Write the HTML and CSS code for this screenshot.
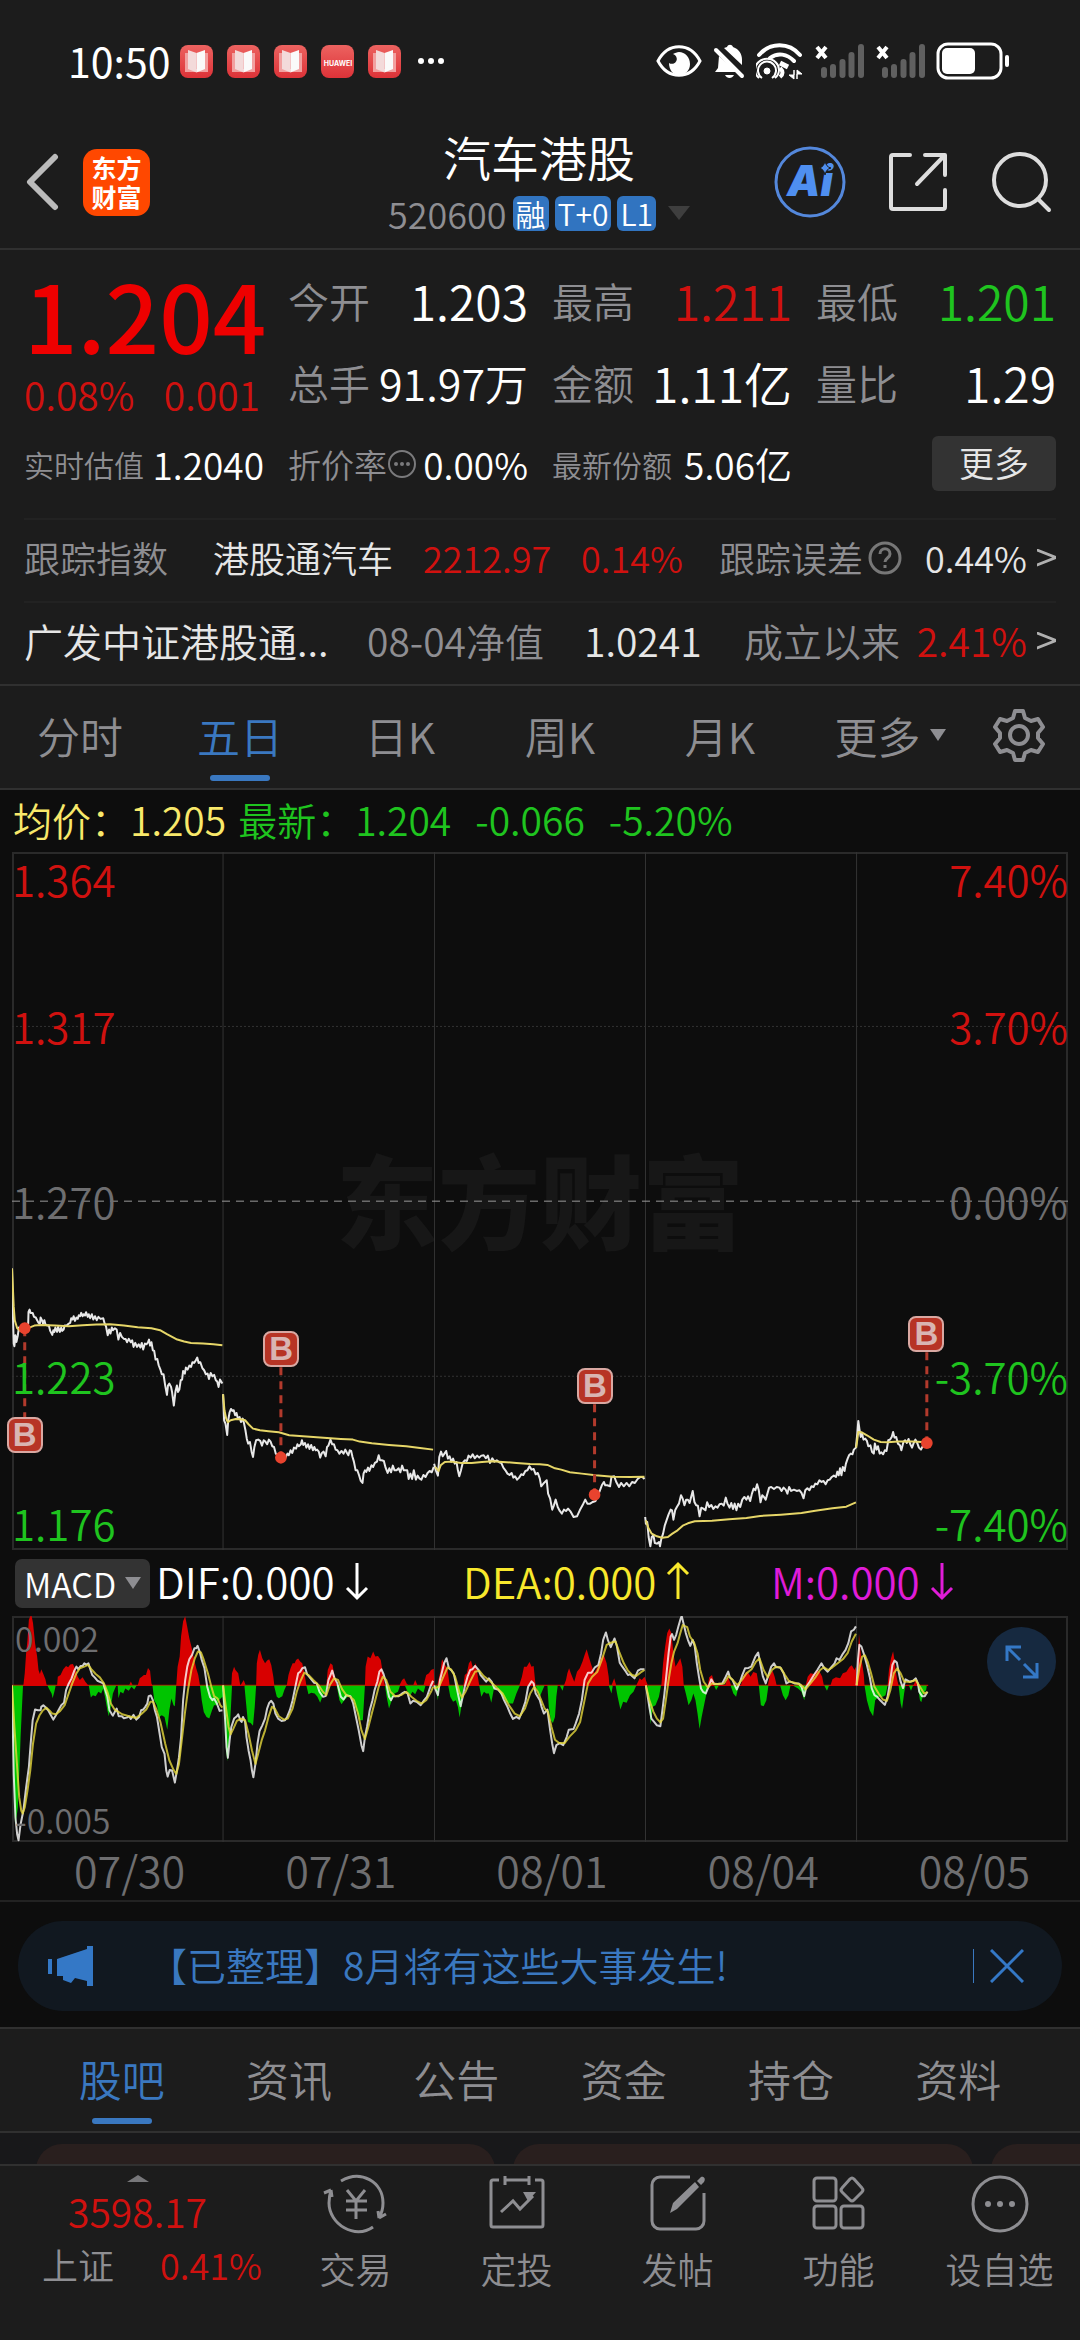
FILE: index.html
```html
<!DOCTYPE html>
<html lang="zh-CN">
<head>
    <meta charset="UTF-8">
    <meta name="viewport" content="width=device-width, initial-scale=1.0">
    <title>汽车港股 520600</title>
    <link rel="stylesheet" href="styles.css">
</head>
<body>
    <svg class="defs" aria-hidden="true">
        <defs>
            <linearGradient id="redGrad" x1="0" y1="0" x2="0" y2="1">
                <stop offset="0" stop-color="#ec6360"/>
                <stop offset="1" stop-color="#dd3238"/>
            </linearGradient>
            <symbol id="book" viewBox="0 0 33 33">
                <rect width="33" height="33" rx="8" fill="url(#redGrad)"/>
                <path d="M5 8h5v17H5zM23 8h5v17h-5zM5 24h23v3H5z" fill="#f2a0a0"/>
                <path d="M8 5l8.500 3v19.500L8 24z" fill="#f3dada"/>
                <path d="M25 5l-8.500 3v19.500L25 24z" fill="#fafafa"/>
            </symbol>
            <symbol id="signal" viewBox="0 0 50 36">
                <path d="M3 4l9 11M12 4L3 15" stroke="#fff" stroke-width="4"/>
                <path d="M10 27v5M19 24v8M28.500 19v13M37.500 12v20M47 4v28" stroke="#606060" stroke-width="6" stroke-linecap="round"/>
            </symbol>
            <symbol id="down" viewBox="0 0 24 40">
                <path d="M12 2v35M2 27l10 10 10-10" fill="none" stroke="currentColor" stroke-width="3"/>
            </symbol>
            <symbol id="up" viewBox="0 0 24 40">
                <path d="M12 38V3M2 13L12 3l10 10" fill="none" stroke="currentColor" stroke-width="3"/>
            </symbol>
        </defs>
    </svg>

    <div class="status-bar">
        <span class="clock">10:50</span>
        <div class="notifications">
            <svg><use href="#book"/></svg>
            <svg><use href="#book"/></svg>
            <svg><use href="#book"/></svg>
            <span class="huawei">HUAWEI</span>
            <svg><use href="#book"/></svg>
            <svg viewBox="0 0 33 33" fill="#fff"><circle cx="6" cy="16" r="3"/><circle cx="16" cy="16" r="3"/><circle cx="26" cy="16" r="3"/></svg>
        </div>
        <div class="system-icons">
            <svg width="46" height="36" viewBox="0 0 46 36">
                <path d="M2 18C12-1 34-1 44 18 34 37 12 37 2 18z" fill="none" stroke="#fff" stroke-width="3"/>
                <path d="M17 11a5 5 0 1 1-4 9c0 7 4 12 10 12 7 0 11-5 11-11 0-7-5-12-11-12-2 0-4 1-6 2z" fill="#fff"/>
            </svg>
            <svg width="32" height="36" viewBox="0 0 32 36">
                <path d="M11 5l3-1c1-3 5-3 6 0 6 2 9 7 9 13v5zM6 13l18 16H2l3-4z" fill="#fff"/>
                <path d="M3 7l26 26" stroke="#fff" stroke-width="4" stroke-linecap="round"/>
                <path d="M12 32h9c-2 4-7 4-9 0z" fill="#fff"/>
            </svg>
            <svg width="47" height="38" viewBox="0 0 47 38" fill="none" stroke="#fff">
                <path d="M3 13C14 0 33 0 44 13M14 16c8-6 17-4 24 3" stroke-width="4" stroke-linecap="round"/>
                <path d="M24 21l8 4" stroke-width="5"/>
                <circle cx="11" cy="29" r="3" fill="#fff"/>
                <path d="M6 36a9 9 0 1 1 10 0M3 36a12 11 0 1 1 16 0" stroke-width="2"/>
                <path d="M24 26q5 5 0 9" stroke-width="4"/>
                <path d="M38 28v9l-5-4h5zM41 37v-9l5 4h-5z" fill="#fff" stroke-width="1"/>
            </svg>
            <svg width="50" height="36"><use href="#signal"/></svg>
            <svg width="50" height="36"><use href="#signal"/></svg>
            <svg width="74" height="38" viewBox="0 0 74 38">
                <rect x="2" y="2" width="63" height="34" rx="10" fill="none" stroke="#fff" stroke-width="3"/>
                <rect x="6" y="6" width="33" height="26" rx="5" fill="#fff"/>
                <rect x="69" y="13" width="4" height="12" rx="2" fill="#fff"/>
            </svg>
        </div>
    </div>

    <header class="header">
        <div class="header-left">
            <button class="icon-btn" aria-label="返回">
                <svg width="34" height="58" viewBox="0 0 34 58"><path d="M29 4L4 29l25 25" fill="none" stroke="#bbb" stroke-width="6" stroke-linecap="round" stroke-linejoin="round"/></svg>
            </button>
            <span class="logo">东方<br>财富</span>
        </div>
        <div class="header-title">
            <h1>汽车港股</h1>
            <p>
                <span class="code">520600</span>
                <span class="tag">融</span>
                <span class="tag">T+0</span>
                <span class="tag">L1</span>
                <span class="arrow-down"></span>
            </p>
        </div>
        <div class="header-right">
            <button class="icon-btn" aria-label="AI">
                <svg width="72" height="72" viewBox="0 0 72 72">
                    <circle cx="36" cy="36" r="34" fill="none" stroke="#5488dc" stroke-width="3"/>
                    <text x="13" y="50" class="ai-text">Ai</text>
                    <path d="M51 15q1 6 6 7-5 1-6 7-1-6-6-7 5-1 6-7z" fill="#4f8ff0" stroke="#1c1c1c" stroke-width="1"/>
                </svg>
            </button>
            <button class="icon-btn" aria-label="分享">
                <svg width="60" height="60" viewBox="0 0 60 60" fill="none" stroke="#ddd" stroke-width="4" stroke-linecap="round" stroke-linejoin="round">
                    <path d="M22 3H5a2 2 0 0 0-2 2v50a2 2 0 0 0 2 2h50a2 2 0 0 0 2-2V38M37 3h20v20M56 4L29 32"/>
                </svg>
            </button>
            <button class="icon-btn" aria-label="搜索">
                <svg width="62" height="62" viewBox="0 0 62 62" fill="none" stroke="#ddd" stroke-width="4" stroke-linecap="round">
                    <circle cx="30" cy="29" r="26"/><path d="M48 48l11 11"/>
                </svg>
            </button>
        </div>
    </header>

    <section class="quote">
        <div class="quote-grid">
            <div class="price">
                <strong>1.204</strong>
                <p><span>0.08%</span><span>0.001</span></p>
            </div>
            <dl class="stats">
                <div><dt>今开</dt><dd>1.203</dd></div>
                <div><dt>最高</dt><dd class="red">1.211</dd></div>
                <div><dt>最低</dt><dd class="green">1.201</dd></div>
                <div><dt>总手</dt><dd class="mid">91.97万</dd></div>
                <div><dt>金额</dt><dd>1.11亿</dd></div>
                <div><dt>量比</dt><dd>1.29</dd></div>
            </dl>
        </div>
        <div class="extra">
            <div class="extra-item"><span class="small">实时估值</span><b>1.2040</b></div>
            <div class="extra-item"><span class="rate">折价率
                <svg width="30" height="30" viewBox="0 0 30 30" fill="#7a7a7c"><circle cx="15" cy="15" r="13" fill="none" stroke="#7a7a7c" stroke-width="2"/><circle cx="9" cy="15" r="2"/><circle cx="15" cy="15" r="2"/><circle cx="21" cy="15" r="2"/></svg></span><b>0.00%</b></div>
            <div class="extra-item"><span class="small">最新份额</span><b>5.06亿</b></div>
            <button class="more-btn">更多</button>
        </div>
        <a class="track track-index" href="#">
            <span class="label">跟踪指数</span>
            <span>港股通汽车</span>
            <span class="red">2212.97</span>
            <span class="red">0.14%</span>
            <span class="label with-icon">跟踪误差
                <svg width="34" height="34" viewBox="0 0 34 34" fill="none" stroke="#777" stroke-width="3"><circle cx="17" cy="17" r="15"/><path d="M12 13c0-7 10-7 10 0 0 4-5 4-5 8M17 24v3"/></svg></span>
            <span class="last">0.44% <i class="chevron"></i></span>
        </a>
        <a class="track track-fund" href="#">
            <span>广发中证港股通...</span>
            <span class="label">08-04净值</span>
            <span>1.0241</span>
            <span class="label">成立以来</span>
            <span class="last red">2.41% <i class="chevron"></i></span>
        </a>
    </section>

    <nav class="periods">
        <button>分时</button>
        <button class="active">五日</button>
        <button>日K</button>
        <button>周K</button>
        <button>月K</button>
        <button class="more-period">更多<i class="caret"></i></button>
        <button class="gear" aria-label="设置">
            <svg width="54" height="54" viewBox="0 0 54 54" fill="none" stroke="#8e8e92" stroke-width="4" stroke-linejoin="round">
                <path d="M23 3h8l2 7 6 3 7-2 5 8-5 6v5l5 6-5 8-7-2-6 3-2 7h-8l-2-7-6-3-7 2-5-8 5-6v-5l-5-6 5-8 7 2 6-3z"/>
                <circle cx="27" cy="27" r="9"/>
            </svg>
        </button>
    </nav>

    <main class="charts">
        <p class="legend">
            <span class="yellow">均价：1.205</span>
            <span class="green">最新：1.204</span>
            <span class="green">-0.066</span>
            <span class="green">-5.20%</span>
        </p>

        <div class="price-chart">
            <span class="watermark">东方财富</span>
            <svg class="plot" viewBox="35 -1164 3067 2093" preserveAspectRatio="none">
                <path class="grid" d="M648-1164V929M1262-1164V929M1875-1164V929M2488-1164V929"/>
                <path class="grid dotted" d="M35-641H3102M35 408H3102"/>
                <path class="zero" d="M35-117H3102"/>
                <g class="line price-line">
                    <polyline points="35,85 37,200 40,310 42,318 45,285 48,305 52,285 55,262 62,268 68,275 72,265 78,262 82,250 83,215 86,208 89,218 95,218 99,230 104,232 108,240 112,248 116,250 118,232 122,240 125,250 129,240 132,252 137,256 142,256 146,272 152,284 155,270 158,275 161,262 166,275 169,260 174,275 178,262 181,272 185,268 188,256 194,256 200,250 204,248 207,234 211,238 214,228 218,242 222,232 226,236 229,225 233,228 236,218 240,228 243,222 247,226 250,216 255,230 258,222 262,234 267,222 271,238 276,228 281,240 286,230 292,236 300,234 304,250 308,258 313,285 317,268 321,280 325,262 328,270 334,264 339,268 344,298 349,278 354,290 360,296 365,296 369,306 374,296 380,306 384,300 388,320 393,308 398,320 403,312 408,322 412,308 416,328 421,310 426,312 430,306 433,298 436,316 440,306 444,330 448,332 452,358 457,356 461,375 466,388 470,402 475,402 480,436 485,464 488,436 492,430 497,440 500,456 505,496 510,452 514,436 517,455 521,448 525,420 529,418 532,392 537,400 540,382 545,388 550,376 555,380 559,366 564,368 568,362 573,352 577,368 582,366 588,384 593,390 598,402 603,400 607,416 612,398 617,408 622,404 627,420 631,424 635,440 639,418 646,430"/>
                    <polyline points="648,462 651,540 655,550 660,584 663,540 667,516 671,506 675,512 679,510 683,525 687,518 691,535 696,530 700,545 705,535 709,550 713,570 717,596 721,610 726,605 731,635 735,650 739,620 744,600 750,598 756,602 761,616 766,600 771,604 776,612 781,598 786,604 791,618 796,620 801,640 806,645 812,652 820,655 828,655 835,640 839,645 844,630 849,638 854,622 860,625 864,612 868,618 874,612 877,600 881,614 886,608 890,622 895,612 899,626 904,614 909,630 913,620 917,630 921,628 926,634 930,652 935,638 940,634 946,648 950,620 954,616 960,598 965,612 970,612 975,628 980,630 986,640 992,632 998,640 1003,628 1008,638 1012,645 1016,630 1020,632 1024,650 1028,664 1033,690 1038,690 1043,705 1048,722 1053,728 1056,700 1060,690 1064,695 1069,682 1073,692 1079,675 1084,680 1089,668 1095,664 1100,645 1104,660 1109,660 1115,662 1120,682 1126,698 1131,684 1136,696 1141,676 1146,690 1152,690 1158,684 1163,696 1168,676 1173,690 1178,690 1183,690 1187,716 1192,700 1197,716 1202,690 1208,718 1213,706 1218,714 1224,718 1230,704 1236,710 1242,698 1248,692 1254,696 1260,680"/>
                    <polyline points="1261,670 1266,690 1272,706 1276,650 1281,634 1286,648 1291,640 1296,632 1301,655 1306,648 1311,664 1316,655 1321,670 1326,665 1330,690 1334,708 1339,690 1344,668 1350,660 1356,662 1361,646 1367,652 1373,642 1379,654 1386,646 1392,652 1398,646 1405,645 1411,654 1417,646 1423,668 1430,654 1436,664 1443,660 1450,666 1456,668 1462,682 1468,690 1474,700 1480,704 1486,698 1491,712 1496,708 1502,718 1508,712 1514,702 1520,704 1526,692 1532,690 1538,678 1544,688 1550,686 1556,702 1562,698 1568,715 1572,738 1580,728 1588,720 1592,760 1598,775 1604,808 1609,795 1614,778 1620,800 1626,812 1632,820 1638,808 1644,812 1650,805 1658,815 1666,830 1676,828 1684,810 1692,795 1700,778 1706,790 1714,790 1722,785 1730,782 1736,765 1742,752 1748,735 1754,725 1758,735 1764,735 1772,738 1776,710 1784,708 1790,725 1798,740 1804,728 1812,738 1820,728 1828,738 1836,725 1844,728 1852,716 1860,710 1866,710 1872,716"/>
                    <polyline transform="translate(1568 0)" points="306,830 308,850 312,845 316,890 321,918 325,890 330,885 334,908 340,910 346,905 349,918 353,895 358,880 363,855 368,840 374,822 380,808 384,810 388,838 393,810 398,800 404,790 410,765 415,775 420,795 425,778 430,778 435,788 440,768 444,752 449,785 454,795 459,796 464,828 469,802 475,805 481,810 486,786 492,800 498,794 504,806 510,798 516,802 522,792 528,790 534,796 540,772 545,790 551,802 556,788 561,806 566,790 571,810 576,790 582,800 588,778 594,770 600,778 605,768 611,782 616,760 621,745 626,750 631,732 636,750 641,786 646,765 651,770 656,778 661,760 666,742 672,740 680,746 688,740 696,742 702,752 708,742 714,748 719,760 724,740 730,752 738,748 746,752 754,750 760,758 766,774 771,750 777,744 783,750 789,738 795,740 800,730 806,732 812,720 818,725 824,722 830,732 836,720 842,718 848,710 854,706 860,710 864,694 868,705 872,684 876,705 880,680 885,692 889,670 894,655 898,645 903,640 908,642 912,628 918,622 922,580 925,542 928,565 932,590 936,580 940,598 945,595 950,602 954,618 960,615 965,635 970,640 973,610 978,628 982,618 987,640 992,636 997,642 1002,630 1007,632 1012,600 1017,598 1022,590 1026,575 1030,592 1035,590 1040,610 1046,615 1050,630 1056,605 1061,600 1066,608 1071,596 1076,612 1081,622 1087,605 1091,598 1096,608 1101,622 1107,628 1112,618 1118,618 1124,608"/>
                </g>
                <g class="line average-line">
                    <polyline points="35,85 40,200 43,240 50,264 60,272 72,268 85,262 100,256 120,254 160,256 200,258 240,255 280,253 320,252 360,256 400,261 440,264 465,270 485,282 500,290 515,298 535,304 555,308 590,310 620,312 646,315"/>
                    <polyline points="648,462 652,510 657,535 662,546 670,540 685,536 700,537 712,540 722,552 735,565 755,570 780,573 810,576 840,585 880,588 930,592 990,596 1025,598 1045,604 1080,609 1130,614 1180,618 1220,623 1258,628"/>
                    <polyline points="1264,680 1274,692 1280,675 1292,665 1310,664 1340,668 1370,668 1400,665 1430,663 1460,665 1500,668 1540,671 1568,672 1590,674 1612,684 1630,688 1655,696 1690,700 1730,705 1780,709 1830,710 1872,709"/>
                    <polyline transform="translate(1568 0)" points="308,840 315,862 325,880 340,888 355,892 372,890 385,880 400,870 415,856 430,849 450,843 500,841 550,837 600,833 640,827 700,823 760,818 800,811 850,804 890,799 918,786"/>
                    <polyline transform="translate(1568 0)" points="919,622 925,575 935,576 950,585 970,598 990,605 1010,606 1040,604 1080,604 1126,606"/>
                </g>
                <path class="buy-link" d="M72 264V540M816 381V652M1727 492V763M2692 336V608"/>
                <g fill="#e8432e">
                    <ellipse cx="72" cy="264" rx="17" ry="18"/>
                    <ellipse cx="816" cy="652" rx="17" ry="18"/>
                    <ellipse cx="1727" cy="763" rx="17" ry="18"/>
                    <ellipse cx="2692" cy="608" rx="17" ry="18"/>
                </g>
            </svg>
            <div class="axis axis-left">
                <span class="red">1.364</span><span class="red">1.317</span><span>1.270</span><span class="green">1.223</span><span class="green">1.176</span>
            </div>
            <div class="axis axis-right">
                <span class="red">7.40%</span><span class="red">3.70%</span><span>0.00%</span><span class="green">-3.70%</span><span class="green">-7.40%</span>
            </div>
            <!-- buy points -->
            <span class="buy" style="left: 1.2%; top: 83.5%">B</span>
            <span class="buy" style="left: 25.5%; top: 71.2%">B</span>
            <span class="buy" style="left: 55.2%; top: 76.5%">B</span>
            <span class="buy" style="left: 86.6%; top: 69%">B</span>
        </div>

        <div class="macd-bar">
            <button class="macd-btn">MACD<i class="caret"></i></button>
            <span class="dif">DIF:0.000<svg width="24" height="40"><use href="#down"/></svg></span>
            <span class="dea">DEA:0.000<svg width="24" height="40"><use href="#up"/></svg></span>
            <span class="m">M:0.000<svg width="24" height="40"><use href="#down"/></svg></span>
        </div>

        <div class="macd-chart">
            <svg class="plot" viewBox="35 229 3067 674" preserveAspectRatio="none">
                <path class="grid" d="M648 229V903M1262 229V903M1875 229V903M2488 229V903"/>
                <g>
                    <path fill="#d80000" d="M35 434H1568V438H35zM68 436L72 400 76 340 80 300 84 240 88 230 92 229 96 250 102 310 108 350 112 390 116 402 120 388 126 402 132 418 136 436zM166 436L168 410 176 405 184 388 192 378 198 382 204 374 212 372 220 390 226 410 232 420 240 412 248 425 257 436zM375 436L380 424 386 436zM400 436L406 415 412 410 418 405 424 405 430 384 436 392 440 430 443 436zM512 436L516 380 522 350 526 290 532 245 538 230 544 262 550 295 556 320 562 350 570 385 576 405 581 436zM672 436L674 400 680 380 684 390 692 400 698 436 702 430 708 420 714 436zM744 436L746 370 750 345 755 330 762 355 770 370 776 362 782 358 788 375 794 410 797 436zM833 436L838 405 844 385 850 370 856 370 860 360 866 356 872 365 878 370 886 410 890 436zM948 436L952 390 960 370 966 375 972 410 978 436zM1060 436L1062 380 1068 350 1076 355 1084 335 1090 350 1098 348 1106 360 1112 400 1118 436zM1160 436L1168 420 1174 415 1182 432 1190 436zM1200 436L1206 420 1212 434zM1230 436L1238 405 1246 400 1252 390 1260 386 1262 436zM1270 436L1278 400 1284 358 1290 370 1300 388 1306 436zM1346 436L1350 405 1356 400 1362 370 1368 362 1374 385 1382 370 1388 410 1392 436zM1508 436L1516 410 1522 380 1530 380 1538 366 1544 380 1550 378 1554 420 1556 436z"/>
                    <path fill="#d80000" transform="translate(1568 0)" d="M0 434H1128V438H0zM70 436L76 420 80 400 85 385 90 400 100 425 108 395 116 385 124 365 130 345 136 328 142 350 148 370 158 400 168 380 178 355 186 345 194 370 200 410 202 436zM208 436L216 415 222 436zM280 436L290 415 296 420 304 410 314 436zM353 436L358 370 364 320 370 280 376 266 382 280 388 340 394 380 400 370 408 355 414 380 418 436zM488 436L492 412 500 405 506 425 514 436zM538 436L546 410 552 425 556 436zM584 436L590 410 600 395 606 400 612 410 620 396 630 400 636 436zM662 436L668 405 676 392 682 410 688 436zM772 436L778 410 786 400 796 402 806 390 814 398 820 410 825 436zM844 436L850 418 860 412 872 415 880 400 890 396 900 380 906 376 914 390 918 380 920 436zM920 436L924 350 927 282 931 330 936 370 941 405 943 436zM1010 436L1014 390 1020 355 1026 334 1030 360 1034 395 1038 420 1042 436zM1085 436L1092 420 1098 436z"/>
                    <path fill="#00c400" d="M35 436L38 600 41 750 44 850 48 830 52 800 56 700 60 590 64 500 67 436zM138 436L142 445 150 460 153 474 158 455 162 436zM258 436L264 472 270 465 278 468 286 455 294 460 300 445 306 475 312 510 316 528 322 500 328 460 334 445 338 436zM342 436L344 474 350 455 358 460 364 445 374 452 382 440 390 448 397 436zM443 436L448 480 456 495 462 530 470 525 478 530 486 568 492 510 498 475 504 495 508 498 512 436zM581 436L586 480 592 515 600 530 608 535 616 510 622 495 630 495 638 478 646 470 652 520 658 640 661 662 666 590 671 500 674 436zM710 436L714 480 720 545 728 548 735 556 740 500 744 436zM796 436L804 470 810 474 820 468 826 450 832 436zM890 436L896 462 904 458 914 460 922 470 930 488 938 465 946 455 950 436zM978 436L986 480 992 492 1000 480 1010 470 1020 466 1028 480 1036 510 1046 540 1054 540 1060 436zM1118 436L1124 475 1130 505 1138 480 1146 460 1156 455 1162 436zM1176 436L1184 455 1192 465 1198 455 1206 462 1214 445 1230 458 1236 436zM1262 436L1268 455 1272 480 1276 436zM1302 436L1308 470 1316 485 1324 480 1330 500 1335 532 1340 500 1346 436zM1392 436L1398 470 1406 455 1412 460 1420 460 1427 488 1434 450 1444 440 1452 460 1462 470 1470 485 1480 490 1490 490 1500 460 1510 436zM1556 436L1568 470 1576 450 1582 436z"/>
                    <path fill="#00c400" transform="translate(1568 0)" d="M22 436L26 500 32 540 38 548 44 530 48 470 52 436zM58 436L66 452 70 436zM200 436L208 460 212 436zM220 436L226 470 234 508 242 485 252 488 262 465 272 455 280 436zM312 436L318 500 322 552 328 500 336 495 346 470 352 436zM418 436L424 460 432 495 440 480 446 460 452 480 458 520 464 566 470 530 478 490 484 460 488 436zM506 436L512 450 520 436zM554 436L562 460 570 470 578 436zM636 436L642 495 650 498 658 480 664 436zM698 436L706 465 714 480 722 465 728 436zM735 436L750 445 760 455 768 480 774 436zM826 436L834 452 840 436zM943 436L950 480 958 510 968 528 974 480 984 470 996 470 1004 465 1010 436zM1042 436L1048 490 1052 506 1058 460 1062 436zM1072 436L1078 452 1084 436zM1098 436L1104 480 1108 486 1114 460 1122 450 1124 436z"/>
                </g>
                <g class="line dif-line">
                    <polyline points="35,436 40,700 45,830 50,880 54,898 60,850 68,810 76,740 84,680 90,600 95,540 102,508 110,510 118,510 120,500 126,495 133,502 140,510 148,525 155,538 163,524 170,510 178,495 186,488 192,450 200,430 208,415 216,392 222,380 228,388 234,378 240,378 245,370 251,374 257,370 263,390 268,405 275,412 283,422 292,426 300,430 306,450 312,470 318,510 324,520 328,526 333,516 339,505 345,528 354,528 360,534 368,532 375,528 380,536 388,524 396,538 404,530 410,510 416,508 422,500 428,490 432,468 438,466 444,480 450,510 456,530 463,575 470,620 478,640 483,690 487,708 493,688 500,690 508,726 514,690 520,650 526,590 532,480 538,420 544,380 550,358 558,345 565,325 570,325 574,318 580,335 586,360 594,385 602,440 610,470 617,480 622,475 630,490 638,512 646,510"/>
                    <polyline points="648,436 654,540 658,620 662,652 667,600 672,560 680,535 688,528 692,522 698,540 702,545 706,530 712,545 716,590 722,630 728,660 732,690 736,710 742,670 748,610 754,572 762,555 770,535 776,505 782,488 788,482 794,490 800,520 808,535 818,542 828,540 834,530 842,510 850,480 858,440 866,400 872,395 878,385 886,382 892,402 902,415 912,428 920,430 928,455 938,470 946,468 954,420 960,405 965,392 971,412 980,430 990,470 998,478 1006,465 1018,468 1026,490 1034,530 1042,570 1050,615 1055,632 1060,590 1066,560 1074,510 1082,480 1088,450 1096,425 1102,395 1108,388 1114,402 1122,430 1130,470 1136,480 1142,468 1158,468 1168,460 1176,455 1184,460 1192,490 1200,482 1210,485 1222,495 1232,480 1240,470 1250,440 1258,422"/>
                    <polyline points="1261,436 1268,455 1272,465 1278,420 1284,395 1290,370 1297,355 1304,385 1310,390 1318,400 1326,440 1332,470 1338,498 1344,470 1350,440 1358,410 1366,390 1372,388 1380,378 1390,390 1396,405 1404,415 1412,425 1420,415 1428,425 1436,445 1446,448 1456,460 1464,480 1474,500 1482,520 1490,536 1500,530 1508,535 1516,515 1526,485 1534,440 1544,424 1550,430 1556,460 1568,480 1573,500 1580,520 1590,508 1598,570 1604,610 1609,638 1616,614 1626,608 1636,614 1646,590 1652,568 1666,566 1672,550 1682,520 1690,480 1698,420 1708,398 1718,398 1728,382 1738,375 1746,340 1752,300 1760,278 1766,302 1774,322 1785,296 1792,320 1800,368 1806,378 1818,395 1824,405 1830,403 1843,415 1853,392 1860,388 1872,388"/>
                    <polyline transform="translate(1568 0)" points="308,436 312,460 318,500 324,535 332,545 340,555 350,558 356,510 362,460 368,400 374,340 380,290 384,283 390,300 396,285 402,262 408,240 412,229 417,250 424,280 430,300 437,318 444,300 450,320 456,370 462,410 468,445 474,455 482,460 490,440 498,418 506,432 516,432 530,430 540,410 547,395 552,412 560,420 566,435 572,448 580,430 588,405 596,385 606,384 614,380 620,365 626,350 634,338 640,370 648,410 656,430 664,405 672,380 680,370 686,382 698,382 708,400 716,430 726,424 740,430 752,430 760,440 768,468 774,440 784,425 796,405 806,390 818,370 826,385 836,395 846,382 856,370 862,355 870,360 878,345 888,330 896,310 904,275 912,270 918,260"/>
                    <polyline transform="translate(1568 0)" points="920,436 924,360 928,315 934,320 942,345 950,375 958,410 964,445 972,465 980,470 990,482 1002,494 1010,470 1018,420 1024,375 1030,362 1037,368 1042,395 1048,425 1055,444 1062,418 1074,425 1084,422 1092,415 1098,430 1102,455 1110,468 1118,468 1126,455"/>
                </g>
                <g class="line dea-line">
                    <polyline points="35,436 42,560 50,680 56,770 62,810 66,818 72,800 80,750 88,690 96,610 105,550 115,525 125,510 135,503 143,510 152,520 163,522 175,512 188,495 198,465 210,430 222,400 232,385 245,380 256,375 266,388 278,402 290,412 302,430 312,455 322,490 333,508 344,515 355,522 375,528 395,533 410,522 425,508 437,485 445,485 455,510 466,545 480,610 492,660 503,685 512,700 520,670 528,600 537,520 546,450 556,390 566,355 575,335 584,338 592,360 604,400 614,440 622,468 632,475 640,495 646,502"/>
                    <polyline points="648,436 656,500 664,560 670,582 678,565 688,542 700,535 712,540 722,580 732,630 742,670 750,640 760,600 770,570 780,530 790,500 798,505 810,528 825,538 836,535 850,505 862,455 872,425 884,398 896,405 910,420 925,435 938,455 948,465 958,435 970,415 982,420 994,448 1006,465 1018,470 1028,480 1040,520 1050,570 1060,596 1070,560 1080,520 1090,480 1100,440 1112,410 1122,420 1134,455 1148,468 1165,465 1180,455 1195,470 1210,482 1225,490 1238,480 1252,455 1258,440"/>
                    <polyline points="1261,445 1275,440 1288,410 1300,382 1310,388 1322,410 1334,455 1342,472 1352,455 1365,425 1380,395 1392,392 1405,408 1420,420 1440,440 1460,460 1478,495 1495,520 1510,528 1525,505 1540,460 1552,440 1562,455 1572,480 1582,505 1592,515 1602,560 1612,598 1624,608 1640,608 1655,588 1672,570 1685,545 1698,480 1708,430 1720,410 1735,395 1748,360 1762,315 1776,308 1788,305 1800,340 1812,370 1824,392 1836,405 1848,408 1860,398 1872,390"/>
                    <polyline transform="translate(1568 0)" points="308,436 318,480 330,515 340,535 350,546 358,535 366,480 374,420 382,370 390,335 400,310 408,280 415,256 428,262 436,290 448,308 458,340 466,390 476,425 488,442 500,430 515,432 535,430 548,408 560,420 574,435 588,418 600,400 615,388 628,365 638,355 650,390 662,412 674,390 686,380 700,384 712,405 724,424 740,428 758,434 772,448 786,430 800,412 814,390 825,382 838,390 850,382 865,370 880,358 894,340 906,305 918,282"/>
                    <polyline transform="translate(1568 0)" points="920,436 928,385 936,350 944,346 952,365 962,400 972,440 984,460 996,478 1008,482 1018,450 1028,400 1038,385 1048,400 1058,424 1075,426 1092,420 1104,440 1116,460 1126,456"/>
                </g>
            </svg>
            <div class="axis macd-axis"><span>0.002</span><span>-0.005</span></div>
            <button class="expand" aria-label="全屏">
                <svg width="34" height="34" viewBox="0 0 34 34" fill="none" stroke="#3478c6" stroke-width="3"><path d="M16 2H2v14M2 2l13 13M18 32h14V18M32 32L19 19"/></svg>
            </button>
        </div>

        <div class="dates">
            <span>07/30</span><span>07/31</span><span>08/01</span><span>08/04</span><span>08/05</span>
        </div>

        <div class="notice">
            <svg width="46" height="40" viewBox="0 0 46 40" fill="#3478c6"><path d="M0 13h4v15H0zM9 13L39 3V0h6v40h-6v-5l-12-3-4 5-8-3v-4H9z"/></svg>
            <a href="#">【已整理】8月将有这些大事发生!</a>
            <button class="icon-btn close" aria-label="关闭">
                <svg width="34" height="34" viewBox="0 0 34 34" stroke="#3478c6" stroke-width="3"><path d="M1 1l32 32M33 1L1 33"/></svg>
            </button>
        </div>
    </main>

    <nav class="tabs">
        <button class="active">股吧</button>
        <button>资讯</button>
        <button>公告</button>
        <button>资金</button>
        <button>持仓</button>
        <button>资料</button>
    </nav>

    <div class="feed">
        <div class="card"></div>
        <div class="card"></div>
        <div class="card"></div>
    </div>

    <footer class="bottom-bar">
        <a class="index" href="#">
            <i class="arrow-up"></i>
            <strong>3598.17</strong>
            <span class="index-row"><span>上证</span><span class="red">0.41%</span></span>
        </a>
        <button>
            <svg viewBox="0 0 66 60">
                <path d="M18 7C38-5 60 8 60 29q0 8-4 15M56 44l7-4M56 44l-1-7M50 53C32 66 6 50 6 29q0-6 2-13M8 16l-7 3M8 16l1 7"/>
                <path d="M24 16l9 11 9-11M33 27v18M23 27h21M23 36h21"/>
            </svg>
            交易
        </button>
        <button>
            <svg viewBox="0 0 66 60">
                <path d="M15 6H9a2 2 0 0 0-2 2v43a2 2 0 0 0 2 2h48a2 2 0 0 0 2-2V8a2 2 0 0 0-2-2h-6M21 2v9M45 2v9M21 6h24M17 38l12-11 7 8 13-13"/>
                <path d="M39 18h13l-8 9z" fill="#8e8e92" stroke="none"/>
            </svg>
            定投
        </button>
        <button>
            <svg viewBox="0 0 66 60">
                <path d="M45 3H15a8 8 0 0 0-8 8v36a8 8 0 0 0 8 8h36a8 8 0 0 0 8-8V19"/>
                <path d="M25 39l3-10 22-21 4 5-22 22zM52 7l4-4c3-1 5 2 3 5l-3 3z" fill="#8e8e92" stroke="none"/>
            </svg>
            发帖
        </button>
        <button>
            <svg viewBox="0 0 66 60">
                <rect x="8" y="4" width="22" height="23" rx="3"/>
                <rect x="8" y="32" width="22" height="22" rx="3"/>
                <rect x="35" y="32" width="22" height="22" rx="3"/>
                <path d="M44 5q2-2 4 0l8 9q2 2 0 4l-8 8q-2 2-4 0l-8-8q-2-2 0-4z"/>
            </svg>
            功能
        </button>
        <button>
            <svg viewBox="0 0 66 60">
                <circle cx="33" cy="30" r="27"/>
                <g fill="#8e8e92" stroke="none"><circle cx="21" cy="30" r="3"/><circle cx="33" cy="30" r="3"/><circle cx="45" cy="30" r="3"/></g>
            </svg>
            设自选
        </button>
    </footer>
</body>
</html>
```
FILE: styles.css
```css
* {
    box-sizing: border-box;
}

body {
    margin: 0;
    background: #1c1c1c;
    color: #fff;
    font-family: "Noto Sans CJK SC", "Noto Sans", sans-serif;
    font-size: 36px;
    font-weight: 350;
    line-height: 48px;
}

h1, p, dl, dd {
    margin: 0;
}

h1, b {
    font-weight: inherit;
}

button {
    padding: 0;
    border: none;
    background: none;
    color: inherit;
    font: inherit;
    cursor: pointer;
}

a {
    color: inherit;
    text-decoration: none;
}

svg {
    display: block;
    flex-shrink: 0;
}

.defs {
    position: absolute;
    width: 0;
    height: 0;
}

.red { color: #d0110f; }
.green { color: #1fc41f; }
.yellow { color: #f8e86a; }

/* status bar */
.status-bar {
    display: flex;
    align-items: center;
    padding: 37px 70px 35px 68px;
}

.clock {
    padding-bottom: 2px;
    font-size: 41px;
    font-weight: 400;
    line-height: 46px;
}

.notifications {
    display: flex;
    gap: 14px;
    margin-left: 10px;
}

.notifications svg,
.huawei {
    width: 33px;
    height: 33px;
}

.huawei {
    border-radius: 8px;
    background: linear-gradient(#ec6360, #dd3238);
    font-family: Inter, sans-serif;
    font-size: 7px;
    font-weight: 700;
    line-height: 38px;
    text-align: center;
}

.system-icons {
    display: flex;
    align-items: center;
    gap: 11px;
    margin-left: auto;
}

/* header */
.header {
    display: grid;
    grid-template-columns: 1fr auto 1fr;
    align-items: center;
    padding: 5px 28px 9px 26px;
    border-bottom: 2px solid #303030;
}

.header-left,
.header-right {
    display: flex;
    align-items: center;
}

.header-left {
    gap: 23px;
}

.header-right {
    gap: 42px;
    justify-content: flex-end;
}

.logo {
    width: 67px;
    padding: 4px 0 5px;
    border-radius: 14px;
    background: #ff4800;
    font-size: 25px;
    font-weight: 700;
    line-height: 29px;
    text-align: center;
}

.header-title h1 {
    font-size: 48px;
    line-height: 62px;
    text-align: center;
}

.header-title p {
    display: flex;
    align-items: center;
    gap: 6px;
    line-height: 52px;
}

.code {
    color: #8e8e92;
}

.tag {
    padding: 0 3px;
    border-radius: 6px;
    background: #3174c0;
    font-size: 30px;
    line-height: 35px;
}

.arrow-down {
    margin-left: 6px;
    border: 11px solid transparent;
    border-top: 14px solid #3e3e3e;
    border-bottom: 0;
}

.ai-text {
    fill: #4f8ff0;
    font-family: Inter, sans-serif;
    font-size: 42px;
    font-weight: 900;
    font-style: italic;
}

/* quote */
.quote {
    padding: 0 24px;
    border-bottom: 2px solid #303030;
}

.quote-grid,
.extra {
    display: grid;
    grid-template-columns: repeat(4, minmax(0, 1fr));
    column-gap: 24px;
}

.price strong {
    display: block;
    padding-top: 10px;
    color: #ee0000;
    font-size: 94px;
    font-weight: 500;
    line-height: 106px;
    text-align: center;
}

.price p {
    display: flex;
    justify-content: space-between;
    padding-right: 4px;
    color: #d0110f;
    font-size: 39px;
    line-height: 56px;
}

.stats {
    display: grid;
    grid-column: span 3;
    grid-template-columns: repeat(3, minmax(0, 1fr));
    grid-auto-rows: 82px;
    column-gap: 24px;
    padding: 9px 0 3px;
}

.stats div,
.extra-item {
    display: flex;
    align-items: center;
    justify-content: space-between;
    white-space: nowrap;
}

.stats dt {
    color: #8e8e92;
    font-size: 41px;
}

.stats dd {
    font-size: 48px;
}

.stats .mid {
    font-size: 43px;
}

.extra {
    align-items: center;
    padding: 10px 0 27px;
}

.extra b {
    font-size: 37px;
}

.small,
.rate {
    color: #8e8e92;
    font-size: 30px;
}

.rate {
    display: flex;
    align-items: center;
    font-size: 33px;
}

.more-btn {
    justify-self: end;
    padding: 0 27px 4px;
    border-radius: 6px;
    background: #333;
    color: #e6e6e6;
    font-size: 35px;
    line-height: 51px;
}

.track {
    display: grid;
    align-items: center;
    padding-bottom: 6px;
    border-top: 2px solid #222;
    color: #e6e6e6;
    line-height: 75px;
    white-space: nowrap;
}

.track-index {
    grid-template-columns: 189fr 210fr 158fr 138fr 190fr 147fr;
}

.track-fund {
    grid-template-columns: 343fr 217fr 160fr 165fr 147fr;
    font-size: 39px;
}

.track .red {
    color: #d0110f;
}

.track .label {
    color: #8e8e92;
}

.with-icon {
    display: flex;
    align-items: center;
    gap: 5px;
}

.last {
    display: flex;
    align-items: center;
    justify-content: flex-end;
    gap: 10px;
}

.chevron {
    width: 19px;
    height: 18px;
    background: #b0b0b0;
    clip-path: polygon(0 0, 100% 42%, 100% 58%, 0 100%, 0 84%, 80% 50%, 0 16%);
}

/* tabs, shared by both rows */
.periods,
.tabs {
    display: flex;
    border-bottom: 2px solid #303030;
    color: #8e8e92;
    font-size: 43px;
}

.periods button,
.tabs button {
    display: flex;
    flex: 8;
    align-items: center;
    justify-content: center;
    position: relative;
    padding-bottom: 4px;
    line-height: 98px;
}

.periods .more-period {
    flex: 9;
}

.periods .gear {
    flex: 5;
    justify-content: flex-start;
}

.gear svg {
    margin-left: 12px;
}

.periods .active,
.tabs .active {
    color: #3a78c0;
}

.active::after {
    content: "";
    position: absolute;
    bottom: 7px;
    width: 60px;
    height: 6px;
    border-radius: 3px;
    background: #3a78c0;
}

.caret {
    margin-left: 9px;
    border: 8px solid transparent;
    border-top: 12px solid #8e8e92;
    border-bottom: 0;
}

/* charts */
.charts {
    padding-bottom: 16px;
    background: #0d0d0d;
}

.legend {
    display: flex;
    gap: 24px;
    padding: 0 0 4px 13px;
    font-size: 39px;
    line-height: 58px;
}

.legend .yellow {
    margin-right: -12px;
}

.price-chart,
.macd-chart {
    position: relative;
    margin: 0 12px;
    box-shadow: inset 0 0 0 2px #2a2a2a;
}

.price-chart {
    height: 698px;
}

.macd-chart {
    height: 226px;
}

.plot {
    position: relative;
    width: 100%;
    height: 100%;
}

.plot path,
.plot polyline {
    vector-effect: non-scaling-stroke;
}

.grid {
    fill: none;
    stroke: #333;
    stroke-width: 1px;
}

.dotted {
    stroke-dasharray: 2 2;
}

.zero {
    stroke: #999;
    stroke-width: 1px;
    stroke-dasharray: 8 6;
}

.line {
    fill: none;
    stroke-width: 2px;
    stroke-linejoin: round;
}

.price-line { stroke: #e8e8e8; }
.average-line { stroke: #e6d668; }
.dif-line { stroke: #fff; stroke-opacity: .8; }
.dea-line { stroke: #e6d83c; stroke-opacity: .8; }

.buy-link {
    fill: none;
    stroke: #b23a2c;
    stroke-width: 3px;
    stroke-dasharray: 8 6;
}

.watermark {
    position: absolute;
    inset: 0;
    display: flex;
    align-items: center;
    justify-content: center;
    padding-bottom: 6px;
    color: #171717;
    font-size: 102px;
    font-weight: 900;
}

.axis {
    position: absolute;
    top: 0;
    bottom: 0;
    display: flex;
    flex-direction: column;
    justify-content: space-between;
    color: #6e6e70;
    font-size: 42px;
    line-height: 54px;
}

.axis-left {
    left: 0;
}

.axis-right {
    right: 0;
    text-align: right;
}

/* keeps the inner labels on their grid lines */
.axis span:nth-child(2) { margin-bottom: 28px; }
.axis span:nth-child(4) { margin-top: 28px; }

.buy {
    position: absolute;
    width: 36px;
    height: 36px;
    border: 2px solid #d9a8a2;
    border-radius: 8px;
    background: #b73425;
    color: #d9b5b2;
    font-family: "Liberation Sans", sans-serif;
    font-size: 33px;
    font-weight: 700;
    line-height: 32px;
    text-align: center;
    transform: translate(-50%, -50%);
}

.macd-bar {
    display: grid;
    grid-template-columns: 141fr 307fr 308fr 309fr;
    align-items: center;
    padding-left: 15px;
    font-size: 42px;
    line-height: 66px;
}

.macd-bar span {
    display: flex;
    align-items: center;
    gap: 10px;
    padding-bottom: 4px;
    line-height: 62px;
}

.macd-btn {
    display: flex;
    align-items: center;
    justify-content: center;
    width: 135px;
    border-radius: 7px;
    background: #333;
    font-size: 34px;
    line-height: 49px;
}

.dea { color: #f8e82c; }
.m { color: #e01cd8; }

.macd-axis {
    left: 3px;
    font-size: 34px;
    line-height: 44px;
}

.macd-axis span:nth-child(2) {
    margin-bottom: 0;
}

.expand {
    position: absolute;
    top: 11px;
    right: 12px;
    display: flex;
    align-items: center;
    justify-content: center;
    width: 69px;
    height: 69px;
    border-radius: 50%;
    background: #162940;
}

.dates {
    display: grid;
    grid-template-columns: repeat(5, 1fr);
    margin-bottom: 19px;
    padding: 0 0 4px 24px;
    border-bottom: 2px solid #222;
    color: #6e6e70;
    font-size: 43px;
    line-height: 54px;
    text-align: center;
}

.notice {
    display: flex;
    align-items: center;
    margin: 0 18px;
    padding: 0 38px 0 30px;
    border-radius: 45px;
    background: #111820;
    color: #3a78c0;
    font-size: 39px;
    line-height: 86px;
}

.notice a {
    margin-left: 54px;
    padding-bottom: 4px;
}

.close {
    margin-left: auto;
    padding-left: 16px;
    border-left: 1px solid #3a78c0;
}

.tabs {
    padding: 0 38px;
    border-top: 2px solid #303030;
}

/* feed */
.feed {
    display: flex;
    gap: 18px;
    height: 31px;
    padding: 11px 0 0 36px;
    overflow: hidden;
    background: #18181a;
}

.card {
    flex: 0 0 44%;
    height: 100px;
    border-radius: 26px;
    background: #291f1e;
}

/* bottom bar */
.bottom-bar {
    display: grid;
    grid-template-columns: 275fr repeat(5, 161fr);
    padding-bottom: 44px;
    border-top: 2px solid #303030;
    color: #8e8e92;
}

.bottom-bar button {
    display: flex;
    flex-direction: column;
    align-items: center;
    gap: 10px;
    padding-top: 8px;
}

.bottom-bar svg {
    width: 66px;
    height: 60px;
    fill: none;
    stroke: #8e8e92;
    stroke-width: 3px;
}

.index {
    display: flex;
    flex-direction: column;
    align-items: center;
    padding: 9px 13px 0;
}

.index strong {
    color: #d0110f;
    font-size: 39px;
    font-weight: inherit;
    line-height: 58px;
}

.index-row {
    display: flex;
    justify-content: space-between;
    align-self: stretch;
    padding-left: 29px;
}

.arrow-up {
    border: 11px solid transparent;
    border-top: 0;
    border-bottom: 7px solid #77777a;
}
```
